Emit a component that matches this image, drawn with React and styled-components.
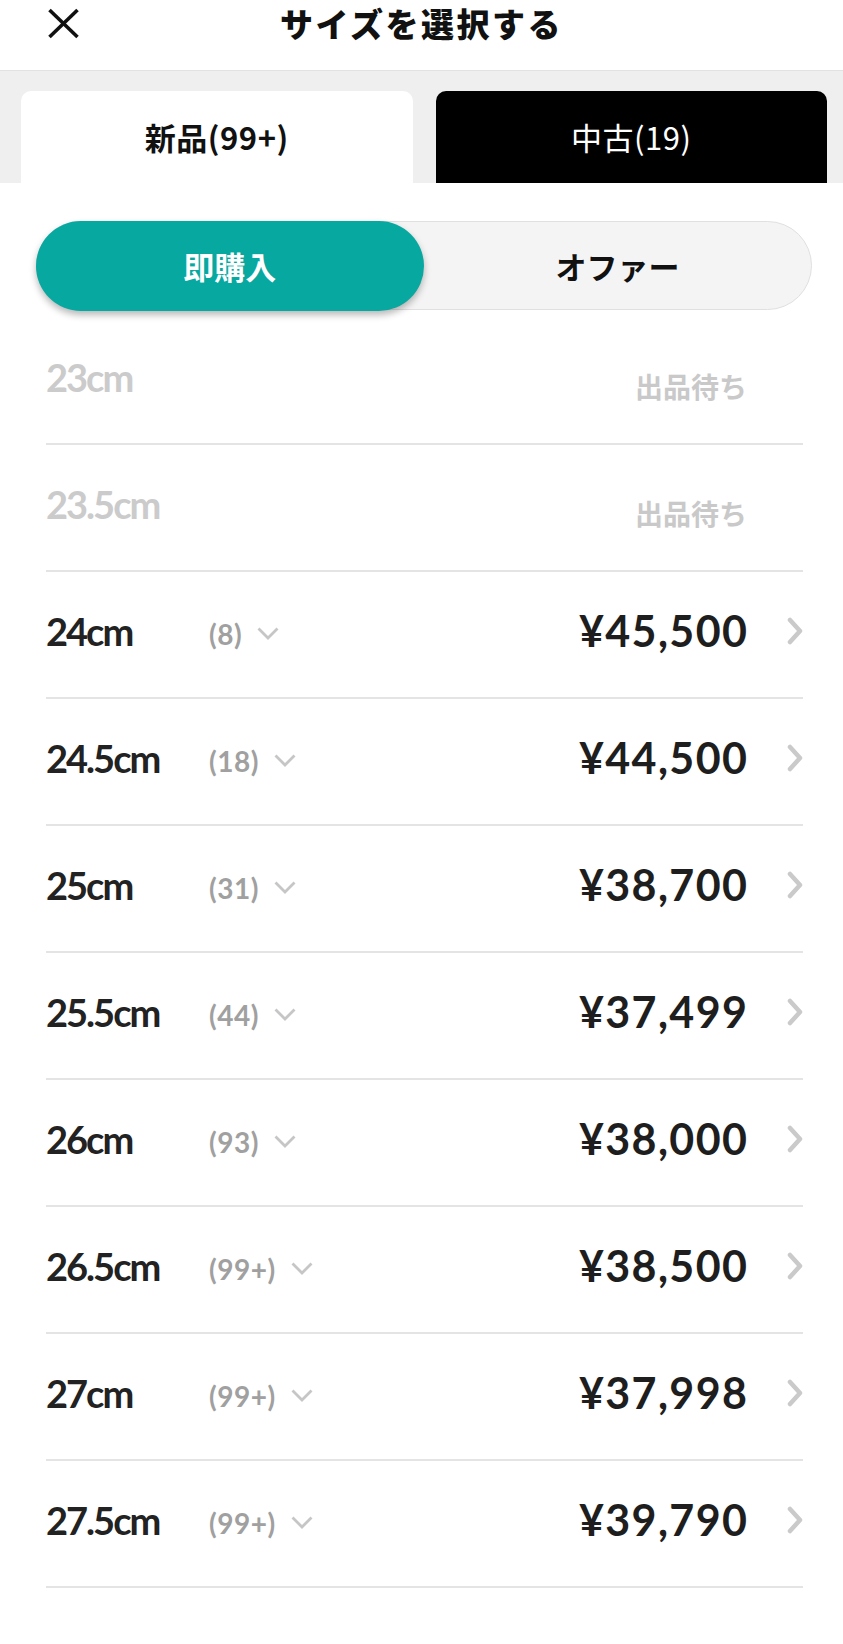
import React from "react";
import styled, { createGlobalStyle } from "styled-components";

const GlobalStyle = createGlobalStyle`
  html, body { margin: 0; padding: 0; background: #ffffff; }
  body { font-family: Lato, "Noto Sans CJK JP", sans-serif; -webkit-font-smoothing: antialiased; }
  * { box-sizing: border-box; }
`;

const Page = styled.div`
  width: 843px;
  min-height: 1644px;
  background: #fff;
`;

const Header = styled.header`
  height: 71px;
  display: grid;
  grid-template-columns: 1fr auto 1fr;
  align-items: center;
  padding-bottom: 25px;
  border-bottom: 1px solid #e2e2e2;
`;

const CloseButton = styled.button`
  justify-self: start;
  margin-left: 47px;
  width: 33px;
  height: 31px;
  padding: 0;
  border: none;
  background: none;
  display: flex;
  align-items: center;
  justify-content: center;
`;

const Title = styled.h1`
  margin: 0;
  font-family: "Noto Sans CJK JP", sans-serif;
  font-weight: 900;
  font-size: 33px;
  line-height: 46px;
  letter-spacing: 2.5px;
  color: #111;
`;

const TabBar = styled.div`
  background: #efefef;
  padding: 20px 16px 0 21px;
  display: grid;
  grid-template-columns: 1fr 1fr;
  gap: 23px;
`;

const Tab = styled.button`
  height: 92px;
  border: none;
  border-radius: 10px 10px 0 0;
  background: ${(p) => (p.$active ? "#ffffff" : "#000000")};
  color: ${(p) => (p.$active ? "#111111" : "#ffffff")};
  font-family: "Noto Sans CJK JP", sans-serif;
  font-weight: ${(p) => (p.$active ? 700 : 400)};
  font-size: 31px;
  letter-spacing: 0.5px;
  display: flex;
  align-items: center;
  justify-content: center;
  padding: 0 0 2px;
`;

const Segment = styled.div`
  margin: 38px 31px 0 36px;
  height: 89px;
  border-radius: 45px;
  background: #f4f4f4;
  border: 1.5px solid #e0e0e0;
  display: grid;
  grid-template-columns: 1fr 1fr;
`;

const SegmentButton = styled.button`
  margin: -1.5px ${(p) => (p.$active ? "0" : "-1.5px")} -1.5px -1.5px;
  border: none;
  border-radius: 45px;
  background: ${(p) => (p.$active ? "#06a8a0" : "transparent")};
  box-shadow: ${(p) => (p.$active ? "0 4px 7px rgba(0,0,0,0.28)" : "none")};
  color: ${(p) => (p.$active ? "#ffffff" : "#111111")};
  font-family: "Noto Sans CJK JP", sans-serif;
  font-weight: 700;
  font-size: 31px;
  display: flex;
  align-items: center;
  justify-content: center;
  padding: 0;
`;

const List = styled.ul`
  list-style: none;
  margin: 8px 0 0;
  padding: 0 40px 0 46px;
`;

const Row = styled.li`
  height: 127px;
  border-bottom: 2px solid #e4e4e4;
  display: flex;
  align-items: center;
  padding-bottom: 8px;
`;

const SizeLabel = styled.span`
  flex: 0 0 163px;
  font-family: Lato, sans-serif;
  font-weight: 700;
  font-size: 38px;
  letter-spacing: -2px;
  line-height: 1;
  color: ${(p) => (p.$disabled ? "#cbcbcb" : "#222222")};
`;

const Count = styled.span`
  font-family: Lato, sans-serif;
  font-weight: 700;
  font-size: 28px;
  letter-spacing: 0.5px;
  line-height: 1;
  color: #a0a0a0;
  margin-top: 6px;
`;

const DownIcon = styled.svg`
  margin-left: 15px;
  margin-top: 6px;
`;

const Spacer = styled.span`
  flex: 1;
`;

const Price = styled.span`
  font-family: Lato, sans-serif;
  font-weight: 700;
  font-size: 43px;
  letter-spacing: 1.4px;
  line-height: 1;
  color: #1e1e1e;
  margin-right: -1.4px;
`;

const Status = styled.span`
  font-family: "Noto Sans CJK JP", sans-serif;
  font-weight: 700;
  font-size: 28px;
  line-height: 1;
  color: #c9c9c9;
  margin-top: 18px;
`;

const ChevronSlot = styled.span`
  flex: 0 0 16px;
  margin-left: 40px;
  display: flex;
  align-items: center;
`;

const rows = [
  { size: "23cm", status: "出品待ち" },
  { size: "23.5cm", status: "出品待ち" },
  { size: "24cm", count: "(8)", price: "¥45,500" },
  { size: "24.5cm", count: "(18)", price: "¥44,500" },
  { size: "25cm", count: "(31)", price: "¥38,700" },
  { size: "25.5cm", count: "(44)", price: "¥37,499" },
  { size: "26cm", count: "(93)", price: "¥38,000" },
  { size: "26.5cm", count: "(99+)", price: "¥38,500" },
  { size: "27cm", count: "(99+)", price: "¥37,998" },
  { size: "27.5cm", count: "(99+)", price: "¥39,790" },
];

function CloseIcon() {
  return (
    <svg width="33" height="31" viewBox="0 0 33 31">
      <line x1="2.5" y1="2" x2="30.5" y2="29" stroke="#111" strokeWidth="3.6" />
      <line x1="30.5" y1="2" x2="2.5" y2="29" stroke="#111" strokeWidth="3.6" />
    </svg>
  );
}

function ChevronRight() {
  return (
    <svg width="16" height="28" viewBox="0 0 16 28">
      <polyline
        points="3,3 13,14 3,25"
        fill="none"
        stroke="#cacaca"
        strokeWidth="4.5"
        strokeLinecap="round"
        strokeLinejoin="round"
      />
    </svg>
  );
}

export default function App() {
  return (
    <Page>
      <GlobalStyle />
      <Header>
        <CloseButton aria-label="close">
          <CloseIcon />
        </CloseButton>
        <Title>サイズを選択する</Title>
        <span />
      </Header>
      <TabBar>
        <Tab $active>新品(99+)</Tab>
        <Tab>中古(19)</Tab>
      </TabBar>
      <Segment>
        <SegmentButton $active>即購入</SegmentButton>
        <SegmentButton>オファー</SegmentButton>
      </Segment>
      <List>
        {rows.map((r) => (
          <Row key={r.size}>
            <SizeLabel $disabled={!r.price}>{r.size}</SizeLabel>
            {r.count && (
              <>
                <Count>{r.count}</Count>
                <DownIcon width="22" height="13" viewBox="0 0 22 13">
                  <polyline
                    points="1.5,1.5 11,11 20.5,1.5"
                    fill="none"
                    stroke="#c6c6c6"
                    strokeWidth="2.8"
                  />
                </DownIcon>
              </>
            )}
            <Spacer />
            {r.price ? <Price>{r.price}</Price> : <Status>{r.status}</Status>}
            <ChevronSlot>{r.price && <ChevronRight />}</ChevronSlot>
          </Row>
        ))}
      </List>
    </Page>
  );
}
